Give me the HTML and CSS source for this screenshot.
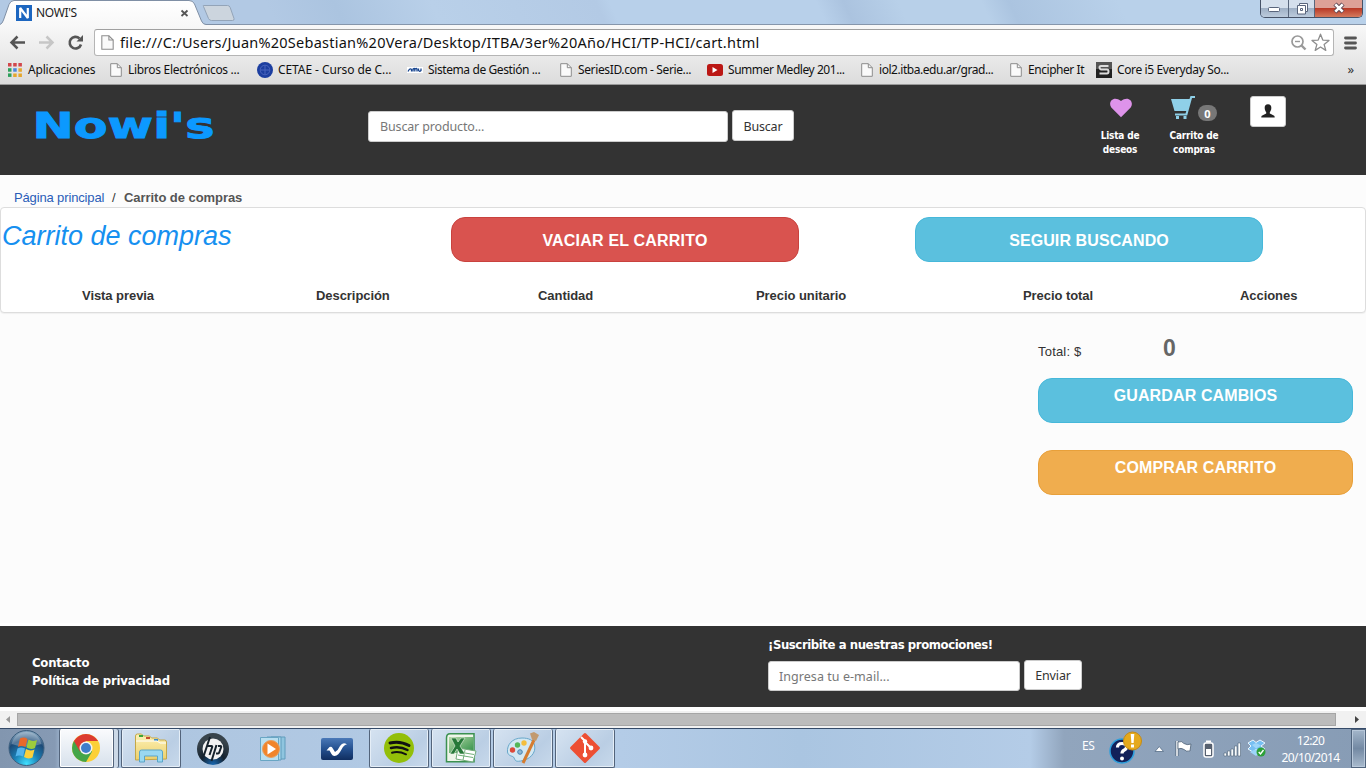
FILE: index.html
```html
<!DOCTYPE html>
<html lang="es">
<head>
<meta charset="utf-8">
<title>NOWI'S</title>
<link rel="stylesheet" href="styles.css">
</head>
<body>
<svg width="0" height="0" class="defs">
  <defs>
    <linearGradient id="tabfill" x2="0" y2="1"><stop stop-color="#fff"/><stop offset="1" stop-color="#f8f8f8"/></linearGradient>
    <linearGradient id="blue" x2="0" y2="1"><stop stop-color="#4a79b8"/><stop offset=".5" stop-color="#24508f"/><stop offset="1" stop-color="#102e60"/></linearGradient>
    <radialGradient id="orb" cx=".5" cy=".95" r=".9"><stop stop-color="#3fe0ff"/><stop offset=".4" stop-color="#1b7fb5"/><stop offset=".75" stop-color="#1c4a77"/><stop offset="1" stop-color="#7e9fba"/></radialGradient>
    <radialGradient id="hpg" cx=".5" cy="1" r=".8"><stop stop-color="#1769b5"/><stop offset=".5" stop-color="#14222f"/><stop offset="1" stop-color="#38444c"/></radialGradient>
    <linearGradient id="folder" x2="0" y2="1"><stop stop-color="#fdf2b8"/><stop offset="1" stop-color="#ecd06c"/></linearGradient>
    <linearGradient id="green" x2="1" y2="1"><stop stop-color="#b6d9a8"/><stop offset="1" stop-color="#2f8f46"/></linearGradient>
    <symbol id="page" viewBox="0 0 12 14"><path d="M.7.7h6.600l4 4v8.600H.7z" fill="#fafafa" stroke="#8d8d8d"/><path d="M7.300.7v4h4" fill="none" stroke="#8d8d8d"/></symbol>
  </defs>
</svg>

<header class="tabstrip">
  <svg class="tabs" width="240" height="25" viewBox="0 0 240 25">
    <path d="M203.500 6.500Q202.500 5.500 204 5.500H227.500Q229.500 5.500 230.200 7.500L234 18.500Q234.500 20.500 232.500 20.500H211.500Q209.500 20.500 208.500 18.500z" fill="#ccd5de" stroke="#93a4b8"/>
    <path d="M0 24.500Q2.500 23.500 3.500 20L9 4.500Q10.500.5 14 .5H189Q193 .5 194.500 4L201.500 21Q203 24.500 206 24.500V25H0z" fill="url(#tabfill)"/>
    <path d="M0 24.500Q2.500 23.500 3.500 20L9 4.500Q10.500.5 14 .5H189Q193 .5 194.500 4L201.500 21Q203 24.500 206 24.500H240" fill="none" stroke="#7f8fa5"/>
    <rect x="16" y="5" width="16" height="16" fill="#1c66c0"/>
    <path d="M20.200 18V8L27.800 18V8" fill="none" stroke="#fff" stroke-width="2.200" stroke-linejoin="bevel"/>
    <path d="M181.500 10.500l6 5.500m0-5.500l-6 5.500" stroke="#555" stroke-width="1.800"/>
  </svg>
  <span class="tab-title">NOWI'S</span>
  <div class="window-buttons">
    <span class="wbtn min"><svg width="14" height="8" viewBox="0 0 14 8"><rect x="1.500" y="2.500" width="11" height="4" rx="1" fill="#fff" stroke="#59657c"/></svg></span>
    <span class="wbtn max"><svg width="14" height="13" viewBox="0 0 14 13"><path d="M4.500 1.500h8v8h-2v2.500h-8V3.500h2z" fill="#fff" stroke="#59657c"/><path d="M10.500 9.500v-6h-6M5.500 6.500h2v2h-2z" fill="none" stroke="#59657c"/></svg></span>
    <span class="wbtn close"><svg width="14" height="12" viewBox="0 0 14 12"><path d="M3 2l8 8m0-8l-8 8" stroke="#5d4652" stroke-width="4.500"/><path d="M3.300 2.300l7.400 7.400m0-7.400l-7.400 7.400" stroke="#fff" stroke-width="2.600"/></svg></span>
  </div>
</header>

<div class="toolbar">
  <svg class="nav" width="94" height="33" viewBox="0 0 94 33">
    <path d="M25 17.500H12M17.500 11.500l-6 6 6 6" fill="none" stroke="#555" stroke-width="2.500"/>
    <path d="M39 17.500H52M46.500 11.500l6 6-6 6" fill="none" stroke="#c6c6c6" stroke-width="2.500"/>
    <path d="M79.500 13.500A5.800 5.800 0 1 0 81 19.500" fill="none" stroke="#555" stroke-width="2.600"/><path d="M83 10v6.500h-6.500z" fill="#555"/>
  </svg>
  <div class="omnibox">
    <svg class="pg" width="13" height="15"><use href="#page"/></svg>
    <span class="url">file:///C:/Users/Juan%20Sebastian%20Vera/Desktop/ITBA/3er%20Año/HCI/TP-HCI/cart.html</span>
    <svg class="omni-icons" width="44" height="24" viewBox="0 0 44 24">
      <circle cx="10.500" cy="11.500" r="5.500" fill="none" stroke="#999" stroke-width="1.700"/><path d="M8 11.500h5" stroke="#999" stroke-width="1.400"/><path d="M14.500 15.500l4 4" stroke="#999" stroke-width="2.400"/>
      <path d="M33.500 4.200l2.300 5.900 6.200.3-4.900 4 1.700 6-5.300-3.400-5.300 3.400 1.700-6-4.900-4 6.200-.3z" fill="#fff" stroke="#8d8d8d" stroke-width="1.300" stroke-linejoin="round"/>
    </svg>
  </div>
  <svg class="menu" width="13" height="14" viewBox="0 0 13 14"><path d="M1.500 2h10M1.500 7h10M1.500 12h10" stroke="#555" stroke-width="2.800" stroke-linecap="round"/></svg>
</div>

<nav class="bookmarks">
  <span class="bm b1"><svg width="14" height="14" viewBox="0 0 14 14"><path d="M0 0h3.500v3.500H0zM5.200 0h3.500v3.500H5.200z" fill="#d2474b"/><path d="M10.400 0h3.500v3.500h-3.500z" fill="#d2474b"/><path d="M0 5.200h3.500v3.500H0z" fill="#2ea05b"/><path d="M5.200 5.200h3.500v3.500H5.200z" fill="#4a86dc"/><path d="M10.400 5.200h3.500v3.500h-3.500zM5.200 10.400h3.500v3.500H5.200zM10.400 10.400h3.500v3.500h-3.500z" fill="#e5a72d"/><path d="M0 10.400h3.500v3.500H0z" fill="#2ea05b"/></svg><i>Aplicaciones</i></span>
  <span class="bm b2"><svg width="12" height="14"><use href="#page"/></svg><i>Libros Electrónicos ...</i></span>
  <span class="bm b3"><svg width="16" height="16" viewBox="0 0 16 16"><circle cx="8" cy="8" r="8" fill="#1c3ea0"/><circle cx="8" cy="8" r="4.800" fill="none" stroke="#4864be"/><path d="M4 8h8M8 4v8" stroke="#4864be"/></svg><i>CETAE - Curso de C...</i></span>
  <span class="bm b4"><svg width="16" height="16" viewBox="0 0 16 16"><path d="M0 5h16v6H0z" fill="#fff"/><path d="M1 9.500q2-4 3.500-2v2m1.500 0V7q1.500-1 1.800 0v2.500M8 7q1.500-1 2 0v2.500m1.500-3v2q1 1.500 2.500 0V6.500" fill="none" stroke="#17458f" stroke-width="1.300"/></svg><i>Sistema de Gestión ...</i></span>
  <span class="bm b5"><svg width="12" height="14"><use href="#page"/></svg><i>SeriesID.com - Serie...</i></span>
  <span class="bm b6"><svg width="16" height="12" viewBox="0 0 16 12"><rect width="16" height="12" rx="2.500" fill="#bb1714"/><path d="M5.500 3v6l5-3z" fill="#fff"/></svg><i>Summer Medley 201...</i></span>
  <span class="bm b7"><svg width="12" height="14"><use href="#page"/></svg><i>iol2.itba.edu.ar/grad...</i></span>
  <span class="bm b8"><svg width="12" height="14"><use href="#page"/></svg><i>Encipher It</i></span>
  <span class="bm b9"><svg width="16" height="16" viewBox="0 0 16 16"><rect width="16" height="16" fill="#222"/><rect width="16" height="7" fill="#555"/><path d="M12.500 4H5Q3.500 4 3.500 5.500T5 7.500h6q1.500 0 1.500 2T11 11.500H3.500" fill="none" stroke="#ddd" stroke-width="2"/></svg><i>Core i5 Everyday So...</i></span>
  <span class="more">»</span>
</nav>

<div class="site-header">
  <svg class="logo" width="200" height="60" viewBox="0 0 200 60"><text x="7.500" y="43" textLength="182" lengthAdjust="spacingAndGlyphs">Nowi's</text></svg>
  <form class="search"><input class="field" placeholder="Buscar producto..."><button class="btn" type="button">Buscar</button></form>
  <div class="shortcut wish">
    <svg width="24" height="22" viewBox="0 0 24 22"><path d="M12 20.300L2.300 10.600C-1.500 5 4.500-2 12 4c7.500-6 13.500 1 9.700 6.600z" fill="#de93ea"/></svg>
    <b>Lista de<br>deseos</b>
  </div>
  <div class="shortcut cart">
    <div class="cart-row"><svg width="24" height="24" viewBox="0 0 24 24"><path d="M0 3h18.500L19.500 0H24v2h-3l-4.800 17.500H4V17.500h10.500l.8-2.500H3.500z" fill="#8fd0e8"/><path d="M5 20h3v3H5zM12.500 20h3v3h-3z" fill="#8fd0e8"/></svg><span class="badge">0</span></div>
    <b>Carrito de<br>compras</b>
  </div>
  <button class="btn user" type="button"><svg width="14" height="14" viewBox="0 0 14 14"><path d="M7 .3c2.500 0 3.500 1.700 3.300 4-.1 2-.8 3-1.500 3.900v1.300l3.900 1.900c.8.400 1 .9 1 2.100H.3c0-1.200.2-1.700 1-2.100l3.900-1.900V8.200C4.500 7.300 3.800 6.300 3.700 4.300 3.500 2 4.500.3 7 .3z" fill="#222"/></svg></button>
</div>

<main>
  <div class="breadcrumb"><a>Página principal</a><span class="sep">/</span><b>Carrito de compras</b></div>
  <section class="panel">
    <div class="panel-head">
      <h1>Carrito de compras</h1>
      <button class="big danger" type="button"><span>VACIAR EL CARRITO</span></button>
      <button class="big info" type="button"><span>SEGUIR BUSCANDO</span></button>
    </div>
    <div class="columns"><b>Vista previa</b><b>Descripción</b><b>Cantidad</b><b>Precio unitario</b><b>Precio total</b><b>Acciones</b></div>
  </section>
  <aside class="summary">
    <div class="total"><span class="label">Total: $</span><strong>0</strong></div>
    <button class="big info" type="button"><span>GUARDAR CAMBIOS</span></button>
    <button class="big warning" type="button"><span>COMPRAR CARRITO</span></button>
  </aside>
</main>

<footer class="site-footer">
  <div class="links"><b>Contacto</b><b>Política de privacidad</b></div>
  <div class="subscribe">
    <b>¡Suscribite a nuestras promociones!</b>
    <form><input class="field" placeholder="Ingresa tu e-mail..."><button class="btn" type="button">Enviar</button></form>
  </div>
</footer>

<div class="scrollbar">
  <svg width="17" height="17" viewBox="0 0 17 17"><path d="M10 5v7L6 8.500z" fill="#999"/></svg>
  <div class="thumb"></div>
  <svg width="17" height="17" viewBox="0 0 17 17"><path d="M6 5v7l4-3.500z" fill="#444"/></svg>
</div>

<div class="taskbar">
  <div class="start"><svg width="38" height="38" viewBox="0 0 38 38"><circle cx="19.500" cy="19" r="17.500" fill="url(#orb)" stroke="#3d5f7e"/><path d="M4.500 15Q8 3 19.500 3t15 12Q19 20 4.500 15z" fill="#fff" opacity=".25"/><path d="M13 9.500q4-2 7.500.5l-2 8q-4-2-7.500 0z" fill="#e8682b"/><path d="M21.500 10.500q4 2.500 8.500.5l-2 8q-4 2-8.500-.5z" fill="#9ccc3c"/><path d="M10.500 19.500q3.500-2 7.500 0l-2 8q-4-2-7.500 0z" fill="#54b4ec"/><path d="M19 20q4 2.500 8.500.5l-2 8q-4.500 2-8.500-.5z" fill="#fbd03c"/></svg></div>
  <div class="task open chrome"><svg width="28" height="28" viewBox="0 0 28 28"><circle cx="14" cy="14" r="14" fill="#fcd038"/><path d="M1.900 7A14 14 0 0 0 14 28l6.100-10.500L14 14z" fill="#43a547"/><path d="M14 7h12.100A14 14 0 0 0 1.900 7L8 17.500z" fill="#dc3b30"/><circle cx="14" cy="14" r="6.500" fill="#f4f4f4"/><circle cx="14" cy="14" r="5" fill="#3f7ecb"/></svg></div>
  <div class="task open t2"><svg width="34" height="30" viewBox="0 0 34 30"><path d="M1.500 27V3q0-2 2-2h4l2 2h6l2 2h6l2 2h5q2 0 2 2v17z" fill="url(#folder)" stroke="#c4a748"/><path d="M5 2h4v2H5z" fill="#3aa53b"/><path d="M12 4h4v2h-4z" fill="#c64b31"/><path d="M20 6h4v2h-4z" fill="#3a8cc9"/><path d="M2 8h21l3 2h6" stroke="#fff" fill="none"/><path d="M5.500 29V19q0-2 2-2h19q2 0 2 2v10h-5v-6h-13v6z" fill="#9ad8f1" stroke="#5aa5c8"/></svg></div>
  <div class="task t3"><svg width="34" height="34" viewBox="0 0 34 34"><circle cx="17" cy="17" r="16" fill="url(#hpg)"/><circle cx="17" cy="17" r="10.500" fill="#f3f3f3"/><path d="M14 5l-6 18M11.500 14h4q1 0 .7 1l-2.700 8M22 14h2.500q1 0 .7 1l-2 5.500q-.3 1-1.200 1h-2M20.500 13l-5 16" fill="none" stroke="#16222c" stroke-width="2"/></svg></div>
  <div class="task t4"><svg width="30" height="26" viewBox="0 0 30 26"><path d="M11 1h14v22H11z" fill="#8fc5df" stroke="#609cbc"/><path d="M7 1h14v23H7z" fill="#a9d8ec" stroke="#609cbc"/><path d="M.5 1.500h18v23H.5z" fill="#b9dff0" stroke="#69a6c4"/><circle cx="11" cy="13" r="8.500" fill="#f1852b" stroke="#e6a061"/><path d="M7.500 7.500v11l8.500-5.500z" fill="#fff"/></svg></div>
  <div class="task t5"><svg width="32" height="22" viewBox="0 0 32 22"><rect width="32" height="22" rx="2" fill="url(#blue)"/><path d="M5.500 12.500l3-3.500q2-1 3 1l2.500 4q3-1.500 5-6 3-4.500 7-1.500-3 0-5.500 5-3 6-7 6.500-2 0-3-2l-2-3.500z" fill="#fff"/></svg></div>
  <div class="task open t6"><svg width="30" height="30" viewBox="0 0 30 30"><circle cx="15" cy="15" r="15" fill="#93bf09"/><path d="M6 10Q16 7.500 25 12.500" fill="none" stroke="#111" stroke-width="3" stroke-linecap="round"/><path d="M7 15Q16 13 23.500 17" fill="none" stroke="#111" stroke-width="2.500" stroke-linecap="round"/><path d="M8 19.700Q15 18 22 21.300" fill="none" stroke="#111" stroke-width="2" stroke-linecap="round"/></svg></div>
  <div class="task open t7"><svg width="32" height="30" viewBox="0 0 32 30"><path d="M5 .8h24v28H1.500V5q0-4.200 3.500-4.200z" fill="#eef5e9" stroke="#3b9150" stroke-width="1.500"/><path d="M4 4h24v16H4z" fill="url(#green)"/><path d="M13 15l18 3-3 11-17-3z" fill="#fff" stroke="#71ab79"/><path d="M14 19l15 2.500M13 22l15 2.500M20 17l-2 10" stroke="#70af79" fill="none"/><path d="M6 5h5l2 4 3-4h4l-5 8 5 8h-5l-3-5-3 5H5l5-8z" fill="#267838" stroke="#e9f4e5" stroke-width=".6"/></svg></div>
  <div class="task open t8"><svg width="34" height="32" viewBox="0 0 34 32"><path d="M16 6C6 6 .8 13 1.500 20c.5 4 5 4 6 5 2 3 1 5 7 4 9-1 16-8 14-16-1-5-6-7-12.500-7z" fill="#d3e8f3" stroke="#67a7ca"/><circle cx="6.500" cy="18" r="2.700" fill="#dc4a3b"/><circle cx="11.500" cy="13" r="2.700" fill="#55b658"/><circle cx="18" cy="11" r="2.700" fill="#f4be3c"/><circle cx="14" cy="20" r="2.300" fill="#8eb8d5" stroke="#4784b1"/><path d="M28 8L17 31" stroke="#d57c2f" stroke-width="3"/><path d="M24 1.500l4-1.500 5 3-3 6-4-1.500z" fill="#c29a6f"/></svg></div>
  <div class="task open t9"><svg width="32" height="32" viewBox="0 0 32 32"><rect x="5" y="5" width="22" height="22" rx="1.500" transform="rotate(45 16 16)" fill="#ed4f33"/><path d="M12 5l4 4v15M16 10l6 6" fill="none" stroke="#fff" stroke-width="2"/><circle cx="16" cy="9.500" r="2.200" fill="#fff"/><circle cx="22" cy="16" r="2.400" fill="#fff"/><circle cx="16" cy="23" r="2.400" fill="#fff"/></svg></div>
  <div class="tray">
    <span class="lang">ES</span>
    <svg class="help" width="34" height="34" viewBox="0 0 34 34"><circle cx="13" cy="20" r="12" fill="#12215a" stroke="#2d9fdc" stroke-width="1.500"/><path d="M8.500 16.500q0-4 4.500-4t4.500 3.500q0 2-2.500 3.200-2 1-2 3.300" fill="none" stroke="#fff" stroke-width="3.200"/><circle cx="13" cy="27.500" r="2" fill="#fff"/><circle cx="23.500" cy="10" r="9" fill="#e5a91c" stroke="#c48a15"/><path d="M21.700 3h3.600l-.7 9h-2.200zM22 13.500h3v3h-3z" fill="#fff"/></svg>
    <svg class="status" width="112" height="20" viewBox="0 0 112 20">
      <path d="M1 12.500h8.500l-4.250-5z" fill="#fff" stroke="#566d86" stroke-width=".8"/>
      <path d="M23 2v15" stroke="#4e6277" stroke-width="3"/><path d="M23 2v15" stroke="#fff" stroke-width="1.500"/><path d="M24 3q4-1.500 6 1.500 3 2 7 .5l-1 7q-4 1-6-1.500-3-2-6-.5z" fill="#fff" stroke="#4e6277" stroke-width=".8"/>
      <rect x="50" y="4" width="9" height="14" rx="2" fill="#576170" stroke="#fff" stroke-width="1.500"/><path d="M52 1.500h5v2h-5z" fill="#fff"/><path d="M52 10h5v6h-5z" fill="#fff"/>
      <path d="M70 14h2.500v3H70zM73.500 12H76v5h-2.500zM77 10h2.500v7H77zM80.500 7H83v10h-2.500zM84 4h2.500v13H84z" fill="#f8fbfd" stroke="#53667b" stroke-width=".6"/>
      <path d="M94 4l5-3 3 2.500L106 1l5 3-4 3 4 3-5 3-4-3-3 3-5-3 3-3z" fill="#77bff2" stroke="#e9f6ff"/><path d="M98 6l4-2 5 2.500-5 3zM96 13l6 4 5-4-5-3z" fill="#9dd5fa"/><circle cx="107" cy="13" r="4.500" fill="#2da038"/><path d="M104.700 13l1.800 2 3-4" fill="none" stroke="#fff" stroke-width="1.400"/>
    </svg>
    <div class="clock"><span>12:20</span><span>20/10/2014</span></div>
    <div class="desktop"></div>
  </div>
</div>
</body>
</html>
```
FILE: styles.css
```css
* { box-sizing: border-box; }
body { margin: 0; width: 1366px; height: 768px; overflow: hidden; display: flex; flex-direction: column; background: #fff; color: #333; font-family: "Noto Sans", sans-serif; font-size: 12px; }
body > * { flex: none; }
svg { display: block; flex: none; }
button, input { font: inherit; margin: 0; }
span, b, i, a { white-space: nowrap; }
.defs { position: absolute; }

.tabstrip { height: 25px; display: flex; position: relative; border-bottom: 1px solid #8696ab; background: linear-gradient(65deg, transparent 0 20%, #abc4e0 25%, #b9d0e9 32%, #b3cae5 44%, #b8d0ea 45% 60%, #abc3df 62%, #b8d0e9 66% 72%, #abc4e0 74%, #b9d1ea 82%), #b2c9e4; }
.tabs { height: 25px; }
.tab-title { position: absolute; left: 36px; top: 5px; line-height: 16px; font-size: 12px; color: #222; letter-spacing: -.35px; }
.window-buttons { margin-left: auto; margin-right: 3px; display: flex; width: 103px; height: 18px; border: 1px solid #465267; border-top: 0; border-radius: 0 0 5px 5px; overflow: hidden; }
.wbtn { display: flex; align-items: center; justify-content: center; width: 28px; border-right: 1px solid #58667c; background: linear-gradient(#d4dfec 0 48%, #9fb0c5 50%, #bccbdc); }
.max { width: 27px; padding-bottom: 1px; }
.close { width: 47px; border: 0; background: linear-gradient(#dda197 0 45%, #b93a27 50%, #d57a5d); padding-bottom: 2px; }

.toolbar { height: 33px; display: flex; background: linear-gradient(#f8f8f8, #e9e9e9); }
.omnibox { margin-top: 4px; width: 1240px; height: 27px; border: 1px solid #b5b5b5; border-top-color: #a0a0a0; border-radius: 3px; background: #fff; display: flex; padding-left: 6px; }
.pg { margin-top: 5px; }
.url { margin-left: 6px; font-size: 14.500px; line-height: 25px; color: #111; letter-spacing: .25px; }
.omni-icons { margin-left: auto; margin-right: 2px; }
.menu { margin: 11px 0 0 10px; }

.bookmarks { height: 27px; background: linear-gradient(#e9e9e9, #dcdcdc); border-bottom: 1px solid #999; display: flex; padding-left: 8px; }
.bm { display: flex; align-items: center; gap: 6px; color: #111; padding-bottom: 2px; }
.bm i { font-style: normal; letter-spacing: -.37px; margin-top: -1px; }
.b1 { width: 102px; } .b2 { width: 147px; } .b3 { width: 150px; gap: 5px; } .b4 { width: 153px; gap: 5px; } .b5 { width: 147px; } .b6 { width: 154px; gap: 5px; } .b7 { width: 149px; } .b8 { width: 86px; } .b9 { width: 150px; gap: 5px; }
.b1 i { letter-spacing: -.2px; } .b2 i { letter-spacing: -.3px; } .b3 i { letter-spacing: -.08px; } .b4 i { letter-spacing: -.4px; } .b6 i, .b7 i, .b8 i { letter-spacing: -.45px; }
.more { margin-left: auto; margin-right: 12px; line-height: 22px; font-size: 13px; }

.site-header { height: 90px; background: #333; display: flex; }
.logo { margin: 10px 0 0 25px; }
.logo text { font: bold 36px "DejaVu Sans", sans-serif; fill: #0c99ff; stroke: #0c99ff; stroke-width: .9px; }
.search { display: flex; margin: 25px 0 0 143px; width: 426px; }
.field { border: 1px solid #ccc; border-radius: 3px; background: #fff; height: 31px; padding: 0 11px; font-size: 12.500px; outline: 0; letter-spacing: -.15px; color: #333; }
.field::placeholder { color: #777; opacity: 1; }
.search .field { width: 360px; margin-top: 1px; }
.btn { height: 31px; border: 1px solid #ccc; border-radius: 3px; background: #fff; color: #333; font-size: 12.500px; padding: 1px 0 0; display: flex; align-items: center; justify-content: center; letter-spacing: -.2px; }
.search .btn { width: 62px; margin-left: 4px; }
.shortcut { display: flex; flex-direction: column; align-items: center; color: #fff; font: bold 10px/14px "DejaVu Sans Condensed", sans-serif; text-align: center; letter-spacing: -.2px; }
.wish { margin: 12px 0 0 296px; width: 60px; }
.wish svg { margin-left: 2px; }
.wish b { margin-top: 10px; }
.cart { margin: 11px 0 0 9px; width: 70px; }
.cart-row { display: flex; gap: 3px; }
.cart b { margin-top: 8px; }
.badge { width: 19px; height: 16px; margin-top: 9px; border-radius: 8px; background: #777; font: bold 11px/17px "Open Sans", sans-serif; letter-spacing: 0; }
.user { width: 36px; margin: 11px 0 0 21px; padding: 0 0 2px; }

main { height: 451px; background: #fcfcfc; font-family: "Liberation Sans", Arial, sans-serif; border-bottom: 3px solid #fff; }
.breadcrumb { height: 32px; padding: 14px 0 0 14px; display: flex; line-height: 17px; font-size: 13px; letter-spacing: -.05px; }
.breadcrumb a { color: #2a5db8; width: 98px; letter-spacing: -.14px; }
.breadcrumb .sep { width: 12px; }
.breadcrumb b { color: #555; }
.panel { height: 106px; border: 1px solid #ddd; border-radius: 4px; background: #fff; box-shadow: 0 1px 1px rgba(0,0,0,.05); }
.panel-head { display: flex; height: 73px; }
h1 { margin: 12px 0 0 1px; width: 449px; font: italic 27px/32px "Liberation Sans", Arial, sans-serif; color: #1690f0; white-space: nowrap; }
.big { display: block; height: 45px; border-radius: 14px; border: 1px solid; color: #fff; font: bold 16px/22px "Liberation Sans", Arial, sans-serif; text-align: center; padding: 0 0 9px; letter-spacing: .12px; }
.panel .big { width: 348px; margin-top: 9px; padding: 2px 0 0; letter-spacing: .2px; }
.panel .info { margin-left: 116px; letter-spacing: .1px; }
.danger { background: #d9534f; border-color: #c9423e; }
.info { background: #5bc0de; border-color: #46b8da; }
.warning { background: #f0ad4e; border-color: #e8a03a; }
.columns { display: grid; grid-template-columns: 234px 222px 218px 267px 217px 100px; padding-left: 81px; font-size: 13px; line-height: 30px; letter-spacing: -.06px; }
.summary { width: 315px; margin-left: 1038px; }
.total { display: flex; height: 65px; }
.label { width: 125px; font-size: 13px; line-height: 16px; margin-top: 31px; letter-spacing: .2px; }
.total strong { font-size: 23px; line-height: 28px; margin-top: 21px; color: #666; }
.summary .big { width: 315px; margin-bottom: 27px; }

.site-footer { height: 81px; background: #333; color: #fff; display: flex; font: bold 13px/18px "DejaVu Sans Condensed", sans-serif; letter-spacing: -.42px; }
.links { width: 768px; padding: 28px 0 0 32px; display: flex; flex-direction: column; letter-spacing: -.22px; }
.subscribe { padding-top: 10px; }
.subscribe b { display: block; }
.subscribe form { display: flex; margin-top: 6px; font-family: "Noto Sans", sans-serif; font-weight: 400; }
.subscribe .field { width: 252px; height: 30px; margin-top: 1px; padding: 0 10px; letter-spacing: .05px; }
.subscribe .btn { width: 58px; height: 30px; margin-left: 4px; letter-spacing: -.15px; }

.scrollbar { margin-top: 4px; height: 17px; display: flex; background: #f1f1f1; }
.thumb { width: 1319px; height: 13px; margin: 2px 13px 0 0; border: 1px solid #a6a6a6; background: #bcbcbc; }
.taskbar { height: 40px; display: flex; border-top: 1px solid #344a68; background: linear-gradient(90deg, #8296af 0, #869ab4 55px, #adc5df 65px, #b4cce7 620px, #aac5e1 800px, #b4cce7 1030px, #91a5bd 1064px, #879cb5); }
.start { margin-left: 7px; width: 52px; }
.task { width: 60px; height: 39px; margin-right: 2px; display: flex; align-items: center; justify-content: center; }
.open { border: 1px solid #53647b; border-top: 0; border-radius: 2px; background: linear-gradient(135deg, #d6e3f1, #bacee4 65%, #c8d9eb); box-shadow: inset 0 0 0 1px #e5eef7; }
.chrome { width: 55px; padding-right: 2px; background: linear-gradient(#fafbfd, #d7e1ec); box-shadow: inset 0 0 0 1px #fff, 4px 0 0 0 #ccd9e7, 5px 0 0 0 #53647b; margin-right: 7px; }
.tray { display: flex; margin-left: auto; color: #fff; }
.lang { margin: 8px 13px 0 0; width: 14px; line-height: 18px; font-size: 12px; letter-spacing: -.3px; }
.help { margin-top: 2px; }
.status { margin: 10px 15px 0 11px; }
.clock { width: 59px; display: flex; flex-direction: column; align-items: center; font-size: 12px; line-height: 17px; padding-top: 3px; letter-spacing: -.6px; }
.desktop { margin-left: 11px; width: 15px; border: 1px solid #50647d; background: linear-gradient(#a4b7cb, #7389a3 50%, #a8bacd); box-shadow: inset 0 0 0 1px #b8c8da; }
```
